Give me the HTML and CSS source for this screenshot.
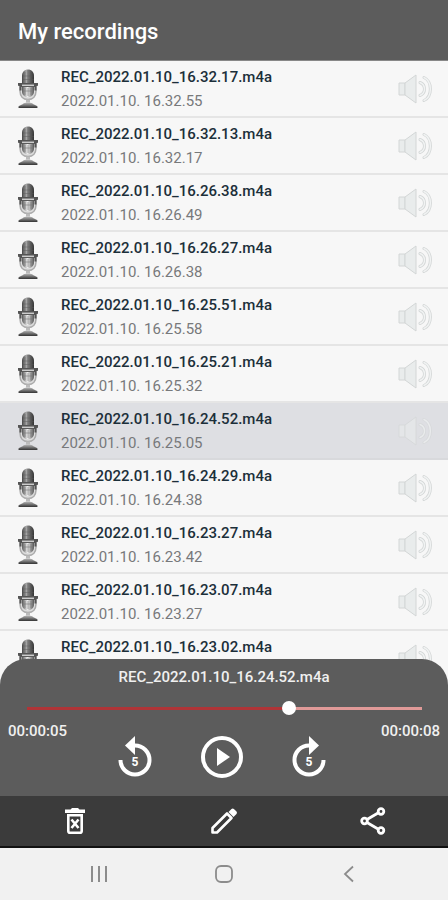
FILE: index.html
```html
<!DOCTYPE html>
<html lang="en">
<head>
    <meta charset="UTF-8">
    <meta name="viewport" content="width=device-width, initial-scale=1.0">
    <title>My recordings</title>
    <link rel="stylesheet" href="styles.css">
</head>
<body>
    <!-- Shared icons -->
    <svg class="sprite" aria-hidden="true">
        <defs>
            <linearGradient id="metal" x1="0" x2="1" y1="0" y2="0">
                <stop offset="0" stop-color="#444"/>
                <stop offset="0.35" stop-color="#aaa"/>
                <stop offset="0.65" stop-color="#666"/>
                <stop offset="1" stop-color="#333"/>
            </linearGradient>
            <linearGradient id="chrome" x1="0" x2="1" y1="0" y2="0">
                <stop offset="0" stop-color="#555"/>
                <stop offset="0.45" stop-color="#eee"/>
                <stop offset="1" stop-color="#555"/>
            </linearGradient>
            <linearGradient id="base" x1="0" x2="0" y1="0" y2="1">
                <stop offset="0" stop-color="#bbb"/>
                <stop offset="1" stop-color="#333"/>
            </linearGradient>
        </defs>
        <symbol id="icon-mic" viewBox="0 0 20 40">
            <path d="M2 18v4c0 5 3 8.500 8 8.500s8-3.500 8-8.500v-4" fill="#ddd" stroke="#aaa" stroke-width="1.500"/>
            <path d="M4 15V7c0-4 2.500-6.500 6-6.500S16 3 16 7v8z" fill="url(#metal)"/>
            <path d="M7 3v11M10 1v13M13 3v11M4 7h12M4 10.500h12" stroke="#555" stroke-width="0.600" opacity="0.700"/>
            <path d="M4 18h12v4c0 4-2.500 6-6 6s-6-2-6-6z" fill="url(#chrome)"/>
            <path d="M7 19v7M10 19v8M13 19v7M4 22h12" stroke="#777" stroke-width="0.600"/>
            <path d="M0 14h20v2.500l-1.500 1v4h-2V18h-13v3.500h-2v-4L0 16.500z" fill="#555"/>
            <path d="M4 16.300h12" stroke="#ccc" stroke-width="1.500"/>
            <path d="M8 30.500h4v3H8z" fill="#bbb"/>
            <path d="M5 35c1-2 9-2 10 0l4 2c.8.500.8 2 0 2H1c-.8 0-.8-1.500 0-2z" fill="url(#base)"/>
        </symbol>
        <symbol id="icon-speaker" viewBox="0 0 34 32">
            <g stroke="#d3d6d6" stroke-linejoin="round">
                <path d="M1 10h6v12H1z" fill="#e9ecec"/>
                <path d="M7 10L18 2v28L7 22z" fill="#e9ecec"/>
                <path d="M22 9.500c6 2.500 6 10.500 0 13M26 4.500c8.500 4 8.500 19 0 23" fill="none" stroke-width="3" stroke-linecap="round"/>
            </g>
            <path d="M22 9.500c6 2.500 6 10.500 0 13M26 4.500c8.500 4 8.500 19 0 23" fill="none" stroke="#f1f3f3" stroke-width="1.400" stroke-linecap="round"/>
        </symbol>
    </svg>

    <div class="app">
        <header class="header">
            <h1>My recordings</h1>
        </header>

        <ul class="recordings">
            <li class="recording">
                <svg class="mic"><use href="#icon-mic"/></svg>
                <button class="details"><span class="name">REC_2022.01.10_16.32.17.m4a</span><span class="date">2022.01.10. 16.32.55</span></button>
                <button class="speaker" aria-label="Play"><svg><use href="#icon-speaker"/></svg></button>
            </li>
            <li class="recording">
                <svg class="mic"><use href="#icon-mic"/></svg>
                <button class="details"><span class="name">REC_2022.01.10_16.32.13.m4a</span><span class="date">2022.01.10. 16.32.17</span></button>
                <button class="speaker" aria-label="Play"><svg><use href="#icon-speaker"/></svg></button>
            </li>
            <li class="recording">
                <svg class="mic"><use href="#icon-mic"/></svg>
                <button class="details"><span class="name">REC_2022.01.10_16.26.38.m4a</span><span class="date">2022.01.10. 16.26.49</span></button>
                <button class="speaker" aria-label="Play"><svg><use href="#icon-speaker"/></svg></button>
            </li>
            <li class="recording">
                <svg class="mic"><use href="#icon-mic"/></svg>
                <button class="details"><span class="name">REC_2022.01.10_16.26.27.m4a</span><span class="date">2022.01.10. 16.26.38</span></button>
                <button class="speaker" aria-label="Play"><svg><use href="#icon-speaker"/></svg></button>
            </li>
            <li class="recording">
                <svg class="mic"><use href="#icon-mic"/></svg>
                <button class="details"><span class="name">REC_2022.01.10_16.25.51.m4a</span><span class="date">2022.01.10. 16.25.58</span></button>
                <button class="speaker" aria-label="Play"><svg><use href="#icon-speaker"/></svg></button>
            </li>
            <li class="recording">
                <svg class="mic"><use href="#icon-mic"/></svg>
                <button class="details"><span class="name">REC_2022.01.10_16.25.21.m4a</span><span class="date">2022.01.10. 16.25.32</span></button>
                <button class="speaker" aria-label="Play"><svg><use href="#icon-speaker"/></svg></button>
            </li>
            <li class="recording selected">
                <svg class="mic"><use href="#icon-mic"/></svg>
                <button class="details"><span class="name">REC_2022.01.10_16.24.52.m4a</span><span class="date">2022.01.10. 16.25.05</span></button>
                <button class="speaker" aria-label="Play"><svg><use href="#icon-speaker"/></svg></button>
            </li>
            <li class="recording">
                <svg class="mic"><use href="#icon-mic"/></svg>
                <button class="details"><span class="name">REC_2022.01.10_16.24.29.m4a</span><span class="date">2022.01.10. 16.24.38</span></button>
                <button class="speaker" aria-label="Play"><svg><use href="#icon-speaker"/></svg></button>
            </li>
            <li class="recording">
                <svg class="mic"><use href="#icon-mic"/></svg>
                <button class="details"><span class="name">REC_2022.01.10_16.23.27.m4a</span><span class="date">2022.01.10. 16.23.42</span></button>
                <button class="speaker" aria-label="Play"><svg><use href="#icon-speaker"/></svg></button>
            </li>
            <li class="recording">
                <svg class="mic"><use href="#icon-mic"/></svg>
                <button class="details"><span class="name">REC_2022.01.10_16.23.07.m4a</span><span class="date">2022.01.10. 16.23.27</span></button>
                <button class="speaker" aria-label="Play"><svg><use href="#icon-speaker"/></svg></button>
            </li>
            <li class="recording">
                <svg class="mic"><use href="#icon-mic"/></svg>
                <button class="details"><span class="name">REC_2022.01.10_16.23.02.m4a</span></button>
                <button class="speaker" aria-label="Play"><svg><use href="#icon-speaker"/></svg></button>
            </li>
        </ul>

        <section class="player">
            <label class="track-name" for="seek">REC_2022.01.10_16.24.52.m4a</label>
            <input class="seek" id="seek" type="range" min="0" max="8000" step="10" value="5360" style="--progress: 67%">
            <div class="times">
                <span>00:00:05</span>
                <span>00:00:08</span>
            </div>
            <div class="controls">
                <button aria-label="Back 5 seconds">
                    <svg width="36" height="44" viewBox="0 0 36 44">
                        <path d="M3.500 25A14.500 14.500 0 1 0 18 10.500" fill="none" stroke="#fff" stroke-width="4"/>
                        <path d="M18 1v19L8 10.500z" fill="#fff"/>
                        <text x="18" y="31" text-anchor="middle">5</text>
                    </svg>
                </button>
                <button aria-label="Play">
                    <svg width="42" height="42" viewBox="0 0 42 42">
                        <circle cx="21" cy="21" r="19" fill="none" stroke="#fff" stroke-width="4"/>
                        <path d="M16 12v18l13-9z" fill="#fff"/>
                    </svg>
                </button>
                <button aria-label="Forward 5 seconds">
                    <svg width="36" height="44" viewBox="0 0 36 44">
                        <path d="M32.500 25A14.500 14.500 0 1 1 18 10.500" fill="none" stroke="#fff" stroke-width="4"/>
                        <path d="M18 1v19l10-9.500z" fill="#fff"/>
                        <text x="18" y="31" text-anchor="middle">5</text>
                    </svg>
                </button>
            </div>
        </section>

        <div class="toolbar">
            <button aria-label="Delete">
                <svg width="20" height="28" viewBox="0 0 20 28">
                    <path d="M0 2.500h5.500L7 1h6l1.500 1.500H20V6H0z" fill="#fff"/>
                    <path d="M3.300 8.200h13.400V24q0 1.800-1.800 1.800H5.100q-1.800 0-1.800-1.800z" fill="none" stroke="#fff" stroke-width="2.600"/>
                    <path d="M6.500 12.500l7 8.500M13.500 12.500l-7 8.500" stroke="#fff" stroke-width="2.600"/>
                </svg>
            </button>
            <button aria-label="Rename">
                <svg width="28" height="28" viewBox="0 0 28 28">
                    <path d="M2.500 25.500v-4.500L17 6.500l4.500 4.500L7 25.500z" fill="none" stroke="#fff" stroke-width="2.600" stroke-linejoin="round"/>
                    <path d="M18.500 5l3-3q1.200-1 2.400 0l2.600 2.600q1 1.200 0 2.400l-3 3z" fill="#fff"/>
                </svg>
            </button>
            <button aria-label="Share">
                <svg width="28" height="28" viewBox="0 0 28 28">
                    <g fill="none" stroke="#fff" stroke-width="2.800">
                        <path d="M8 12.500L19 6M8 15.500L19 22"/>
                        <circle cx="5.500" cy="14" r="2.800"/>
                        <circle cx="22" cy="4.500" r="2.800"/>
                        <circle cx="22" cy="23.500" r="2.800"/>
                    </g>
                </svg>
            </button>
        </div>

        <nav class="system-nav">
            <button aria-label="Recent apps">
                <svg width="18" height="18" viewBox="0 0 18 18"><path d="M2 1v16M9 1v16M16 1v16" stroke="#8c8c8c" stroke-width="2"/></svg>
            </button>
            <button aria-label="Home">
                <svg width="18" height="18" viewBox="0 0 18 18"><rect x="1" y="1" width="16" height="16" rx="5" fill="none" stroke="#8c8c8c" stroke-width="1.800"/></svg>
            </button>
            <button aria-label="Back">
                <svg width="18" height="18" viewBox="0 0 18 18"><path d="M13 1.500L5 9l8 7.500" fill="none" stroke="#8c8c8c" stroke-width="1.800"/></svg>
            </button>
        </nav>
    </div>
</body>
</html>
```
FILE: styles.css
```css
* {
    box-sizing: border-box;
}
body {
    font-family: Roboto, Arial, sans-serif;
    background-color: #f7f7f7;
    margin: 0;
}
button {
    background: none;
    border: none;
    padding: 0;
    font-family: inherit;
    cursor: pointer;
}
svg {
    display: block;
}
.sprite {
    position: absolute;
    width: 0;
    height: 0;
}
.app {
    display: flex;
    flex-direction: column;
    height: 100vh;
}
.header {
    background-color: #5c5c5c;
    color: white;
    padding: 17px 18px 13px;
    border-bottom: 1px solid #888;
}
h1 {
    margin: 0;
    font-size: 22px;
    line-height: 30px;
    font-weight: 500;
}
.recordings {
    flex: 1;
    min-height: 0;
    overflow: hidden;
    list-style: none;
    margin: 0;
    padding: 0;
}
.recording {
    display: flex;
    align-items: center;
    height: 57px;
    padding: 0 16px 0 18px;
    border-bottom: 2px solid #e5e5e5;
}
.recording.selected {
    background-color: #dedfe3;
    border-color: #d8d9dc;
}
.mic {
    width: 20px;
    height: 40px;
    flex-shrink: 0;
}
.details {
    display: flex;
    flex-direction: column;
    flex: 1;
    height: 48px;
    margin-left: 23px;
    text-align: left;
}
.name {
    color: #1c2f3a;
    font-size: 15px;
    line-height: 24px;
    font-weight: 500;
}
.date {
    color: #77797b;
    font-size: 15px;
    line-height: 24px;
}
.speaker svg {
    width: 34px;
    height: 32px;
}
.selected .speaker {
    opacity: 0.6;
}
.player {
    position: relative;
    display: flex;
    flex-direction: column;
    background-color: #5c5c5c;
    color: #f0f0f0;
    height: 137px;
    margin-top: -26px;
    padding-top: 8px;
    border-radius: 26px 26px 0 0;
}
.track-name {
    font-size: 15px;
    line-height: 20px;
    font-weight: 500;
    text-align: center;
}
.seek {
    appearance: none;
    height: 14px;
    margin: 14px 26px 0 27px;
    background: linear-gradient(to right, #b03437 var(--progress), #e09a98 var(--progress)) center / 100% 3px no-repeat;
}
.seek::-webkit-slider-thumb {
    appearance: none;
    width: 14px;
    height: 14px;
    border-radius: 50%;
    background: white;
}
.times {
    display: flex;
    justify-content: space-between;
    padding: 0 8px;
    margin-top: 6px;
    font-size: 15px;
    line-height: 20px;
    font-weight: 500;
}
.controls {
    display: flex;
    justify-content: center;
    align-items: center;
    gap: 48px;
    margin-top: -6px;
    padding-right: 4px;
}
.controls text {
    fill: white;
    font-size: 12px;
    font-weight: 700;
}
.toolbar {
    display: grid;
    grid-template-columns: repeat(3, 1fr);
    justify-items: center;
    background-color: #3b3b3b;
    height: 52px;
    border-bottom: 2px solid #111;
}
.system-nav {
    display: grid;
    grid-template-columns: repeat(3, 1fr);
    justify-items: center;
    background-color: #f1f1f1;
    height: 52px;
    padding: 0 36px;
}
```
